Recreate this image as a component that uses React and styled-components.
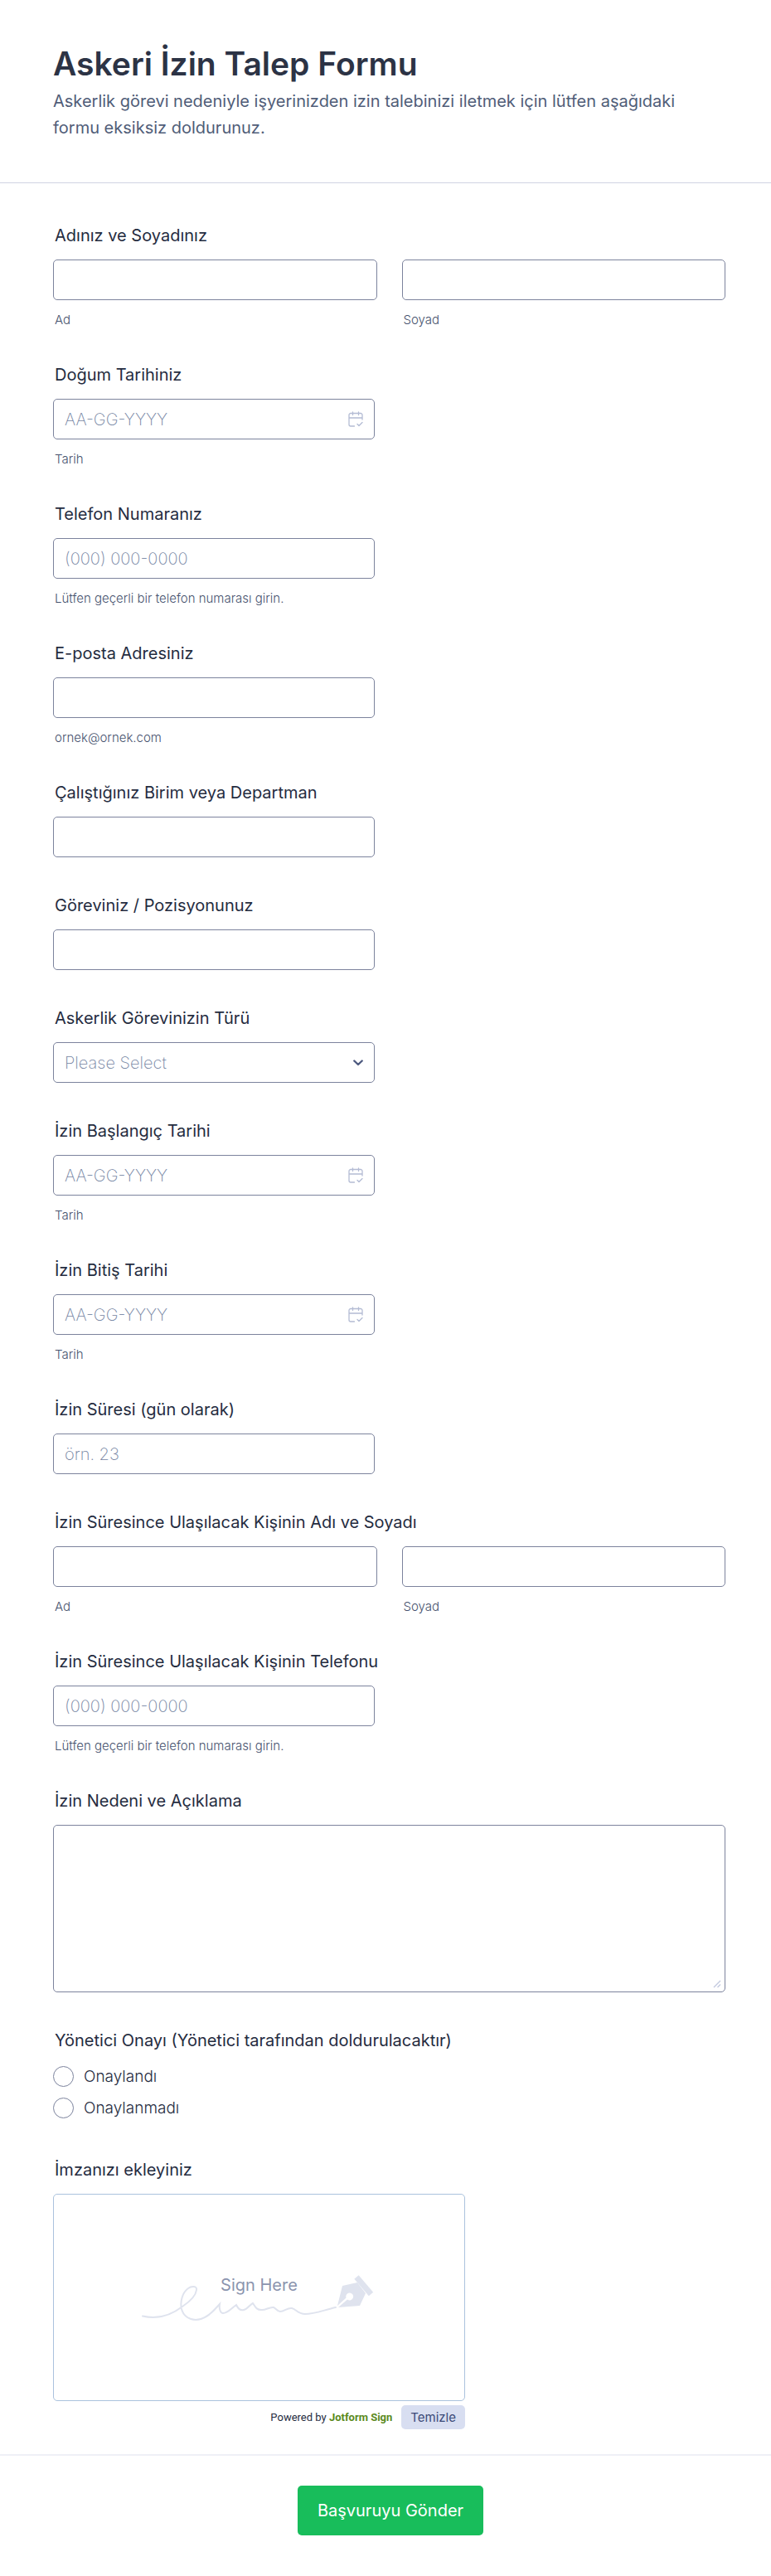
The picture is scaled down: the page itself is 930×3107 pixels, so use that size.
import { useId } from "react"
import styled, { createGlobalStyle } from 'styled-components'

const App = () => {
   return (
      <>
         <GlobalStyle />
         <Form onSubmit={e => e.preventDefault()}>
            <Header>
               <Title>Askeri İzin Talep Formu</Title>
               <Subtitle>Askerlik görevi nedeniyle işyerinizden izin talebinizi iletmek için lütfen aşağıdaki formu eksiksiz doldurunuz.</Subtitle>
            </Header>

            <Fields>
               <NameField label="Adınız ve Soyadınız" />
               <DateField label="Doğum Tarihiniz" />
               <TextField label="Telefon Numaranız" type="tel" placeholder="(000) 000-0000" hint="Lütfen geçerli bir telefon numarası girin." />
               <TextField label="E-posta Adresiniz" type="email" hint="ornek@ornek.com" />
               <TextField label="Çalıştığınız Birim veya Departman" />
               <TextField label="Göreviniz / Pozisyonunuz" />
               <SelectField label="Askerlik Görevinizin Türü" />
               <DateField label="İzin Başlangıç Tarihi" />
               <DateField label="İzin Bitiş Tarihi" />
               <TextField label="İzin Süresi (gün olarak)" placeholder="örn. 23" />
               <NameField label="İzin Süresince Ulaşılacak Kişinin Adı ve Soyadı" />
               <TextField label="İzin Süresince Ulaşılacak Kişinin Telefonu" type="tel" placeholder="(000) 000-0000" hint="Lütfen geçerli bir telefon numarası girin." />
               <AreaField label="İzin Nedeni ve Açıklama" />
               <RadioField label="Yönetici Onayı (Yönetici tarafından doldurulacaktır)" options={['Onaylandı', 'Onaylanmadı']} />
               <Signature label="İmzanızı ekleyiniz" />
            </Fields>

            <Footer>
               <Submit type="submit">Başvuruyu Gönder</Submit>
            </Footer>
         </Form>
      </>
   )
}

const TextField = ({label,hint,type = 'text',placeholder}) => {
   const id = useId()
   return (
      <Field>
         <Label htmlFor={id}>{label}</Label>
         <Half><Input id={id} type={type} placeholder={placeholder} /></Half>
         {hint && <Hint>{hint}</Hint>}
      </Field>
   )
}

const NameField = ({label}) => {
   const id = useId()
   return (
      <Group>
         <Legend>{label}</Legend>
         <Columns>
            <div>
               <Input id={`${id}-ad`} type="text" />
               <HintLabel htmlFor={`${id}-ad`}>Ad</HintLabel>
            </div>
            <div>
               <Input id={`${id}-soyad`} type="text" />
               <HintLabel htmlFor={`${id}-soyad`}>Soyad</HintLabel>
            </div>
         </Columns>
      </Group>
   )
}

const DateField = ({label}) => {
   const id = useId()
   return (
      <Field>
         <Label htmlFor={id}>{label}</Label>
         <Half>
            <Input id={id} type="text" placeholder="AA-GG-YYYY" />
            <IconSlot>
               <svg width="18" height="19" viewBox="0 0 18 19" fill="none" stroke="#b4bcd4" strokeWidth="1.3" strokeLinecap="round" strokeLinejoin="round">
                  <path d="M17 10V4.500a2 2 0 0 0-2-2H3a2 2 0 0 0-2 2V16a2 2 0 0 0 2 2h4.500M1 8h16M5.500 1v3.500M12.500 1v3.500M11 15.500l2 2 4-4" />
               </svg>
            </IconSlot>
         </Half>
         <Hint>Tarih</Hint>
      </Field>
   )
}

const SelectField = ({label}) => {
   const id = useId()
   return (
      <Field>
         <Label htmlFor={id}>{label}</Label>
         <Half>
            <Select id={id} defaultValue="">
               <option value="">Please Select</option>
            </Select>
            <IconSlot>
               <svg width="12" height="8" viewBox="0 0 12 8" fill="none" stroke="#4f5b80" strokeWidth="2.400" strokeLinecap="round" strokeLinejoin="round">
                  <path d="M1.300 1.500 6 6l4.700-4.500" />
               </svg>
            </IconSlot>
         </Half>
      </Field>
   )
}

const AreaField = ({label}) => {
   const id = useId()
   return (
      <Field>
         <Label htmlFor={id}>{label}</Label>
         <AreaBox>
            <TextArea id={id} />
            <Grip width="10" height="10" viewBox="0 0 10 10" fill="none" stroke="#c3cae0" strokeWidth="1.400">
               <path d="M1 9l8-8M5.500 9 9 5.500" />
            </Grip>
         </AreaBox>
      </Field>
   )
}

const RadioField = ({label,options}) => {
   const name = useId()
   return (
      <Group>
         <Legend>{label}</Legend>
         <Options>
            {options.map(option => (
               <Option key={option}>
                  <Radio type="radio" name={name} value={option} />
                  {option}
               </Option>
            ))}
         </Options>
      </Group>
   )
}

const Signature = ({label}) => (
   <Field>
      <Label as="div">{label}</Label>
      <SignWrap>
         <Pad>
            <PadText>Sign Here</PadText>
            <svg width="283" height="64" viewBox="0 0 283 64" fill="none">
               <path d="M1 54.500C20 59 36 53 49 43C58 37 65 31 66 23C67 18 60 18 56 21C49 26 46 37 48 46C50 54 57 59 65 59C77 59 86 49 94 40C93 46 95 51 98 51C104 51 108 45 114 41C116 45 118 48 123 47C128 46 130 41 134 39C137 43 138 47 144 47C149 48 154 43 159 44C162 45 163 49 167 49C172 49 176 44 181 45C186 46 188 52 197 52C209 52 220 47 234 44" stroke="#dfe3ee" strokeWidth="2" strokeLinecap="round" />
               <path d="M236 42 242 18 260 14 270 27 263 42 237 44 248 34.500A4.500 4.500 0 1 0 246.500 32.500Z" fill="#dfe3ee" />
               <path d="M259 7.500 276.500 28" stroke="#dfe3ee" strokeWidth="7" />
            </svg>
         </Pad>
         <SignBar>
            <Powered>Powered by <a href="#sign">Jotform Sign</a></Powered>
            <Clear type="button">Temizle</Clear>
         </SignBar>
      </SignWrap>
   </Field>
)

const GlobalStyle = createGlobalStyle`
*{box-sizing:border-box;}
body{margin:0; background-color:#fff; color:#252c3f; font-family:Inter,"Liberation Sans",sans-serif;}
`;

const Form = styled.form`
display:flex; flex-direction:column;
`;

const Header = styled.header`
padding:52px 64px 50px;
border-bottom:1px solid #d0d3e2;
`;

const Title = styled.h1`
margin:0;
font-size:39px; font-weight:600; line-height:50px;
color:#2c3345;
`;

const Subtitle = styled.p`
margin:4px 0 0;
max-width:770px;
font-size:20px; font-weight:400; line-height:32px;
color:#505d78;
`;

const Fields = styled.div`
display:flex; flex-direction:column; gap:46px;
padding:51px 55px 30px 64px;
`;

const Field = styled.div`
min-width:0;
`;

const Group = styled.fieldset`
margin:0; padding:0; border:0; min-width:0;
`;

const Label = styled.label`
display:block;
margin-bottom:17px; padding:0 2px;
font-size:20px; font-weight:400; line-height:24px;
`;

const Legend = styled(Label).attrs({ as: 'legend' })``;

const Half = styled.div`
position:relative;
max-width:388px;
`;

const Columns = styled.div`
display:grid; grid-template-columns:repeat(2,1fr); gap:30px;
`;

const Input = styled.input`
display:block; width:100%; height:49px;
padding:0 13px;
border:1px solid #7c839d; border-radius:5px;
background-color:#fff;
color:#2c3345; font-family:inherit; font-size:20px; font-weight:300;
&::placeholder{color:#7585a3; opacity:1; font-weight:200;}
`;

const Select = styled(Input).attrs({ as: 'select' })`
appearance:none;
color:#7585a3; font-weight:200;
`;

const AreaBox = styled.div`
position:relative;
`;

const TextArea = styled(Input).attrs({ as: 'textarea' })`
height:202px;
padding:12px 13px;
resize:vertical;
&::-webkit-resizer{display:none;}
`;

const Grip = styled.svg`
position:absolute; right:5px; bottom:5px;
pointer-events:none;
`;

const IconSlot = styled.span`
position:absolute; top:0; bottom:0; right:14px;
display:flex; align-items:center;
pointer-events:none;
`;

const Hint = styled.div`
margin-top:15px; padding:0 2px;
font-size:15px; font-weight:300; line-height:17px;
color:#46526e;
`;

const HintLabel = styled(Hint).attrs({ as: 'label' })`
display:block;
`;

const Options = styled.div`
display:flex; flex-direction:column; align-items:flex-start; gap:13px;
padding:2px 0 4px;
`;

const Option = styled.label`
display:flex; align-items:center; gap:12px;
font-size:19px; font-weight:300; line-height:25px;
`;

const Radio = styled.input`
appearance:none;
width:25px; height:25px; margin:0;
border:1px solid #7c839d; border-radius:50%;
&:checked{border:7px solid #2e69ff;}
`;

const SignWrap = styled.div`
max-width:497px;
`;

const Pad = styled.div`
display:flex; flex-direction:column; align-items:center;
height:250px; padding-top:97px;
border:1px solid #abc2dd; border-radius:5px;
svg{margin-top:-29px;}
`;

const PadText = styled.span`
font-size:20px; line-height:24px;
color:#8b94ae;
`;

const SignBar = styled.div`
display:flex; align-items:center; justify-content:flex-end; gap:11px;
margin-top:5px;
`;

const Powered = styled.span`
font-family:Roboto,"Liberation Sans",sans-serif; font-size:13px; line-height:16px;
a{color:#5b8a1e; font-weight:700; text-decoration:none;}
`;

const Clear = styled.button`
height:29px; padding:0 11px;
border:0; border-radius:5px;
background-color:#d8def1;
color:#3b4a78; font-family:inherit; font-size:15px;
`;

const Footer = styled.footer`
display:flex; justify-content:center;
padding:36px 64px 49px 76px;
border-top:2px solid #eff0f6;
`;

const Submit = styled.button`
height:60px; padding:0 24px;
border:0; border-radius:5px;
background-color:#18bd5b;
color:#fff; font-family:inherit; font-size:20px; font-weight:400;
`;

export default App
